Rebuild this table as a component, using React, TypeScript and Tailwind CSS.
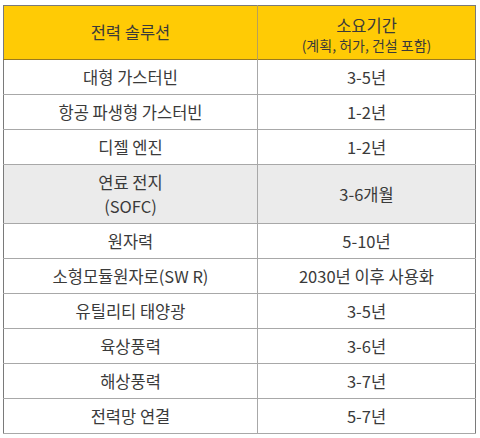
const rows = [
  { name: ["대형 가스터빈"], period: "3-5년" },
  { name: ["항공 파생형 가스터빈"], period: "1-2년" },
  { name: ["디젤 엔진"], period: "1-2년" },
  { name: ["연료 전지", "(SOFC)"], period: "3-6개월", shaded: true },
  { name: ["원자력"], period: "5-10년" },
  { name: ["소형모듈원자로(SW R)"], period: "2030년 이후 사용화" },
  { name: ["유틸리티 태양광"], period: "3-5년" },
  { name: ["육상풍력"], period: "3-6년" },
  { name: ["해상풍력"], period: "3-7년" },
  { name: ["전력망 연결"], period: "5-7년" },
];

export default function App() {
  return (
    <div className="w-[480px] h-[438px] bg-white pt-[5px] pl-[3px] font-['Noto_Sans_CJK_KR',sans-serif] text-[#3a3a3a]">
      <table className="w-[473px] border-collapse border border-[#7a7a7a] text-[16.5px] text-center">
        <thead>
          <tr className="bg-[#ffcb05] h-[54px] border-b border-[#9a7a20]">
            <th className="w-[254px] font-normal border-r border-[#b8a05a]">전력 솔루션</th>
            <th className="font-normal leading-[22px] pt-[2px]">
              <div>소요기간</div>
              <div className="text-[14px] leading-[18px]">(계획, 허가, 건설 포함)</div>
            </th>
          </tr>
        </thead>
        <tbody>
          {rows.map((r, i) => (
            <tr
              key={i}
              className={`border-b border-[#a8a8a8] ${r.shaded ? "bg-[#ebebeb] h-[59px]" : "h-[35px]"}`}
            >
              <td className="border-r border-[#a8a8a8] leading-[24px]">
                {r.name.map((n) => (
                  <div key={n}>{n}</div>
                ))}
              </td>
              <td className="leading-[24px]">{r.period}</td>
            </tr>
          ))}
        </tbody>
      </table>
    </div>
  );
}
